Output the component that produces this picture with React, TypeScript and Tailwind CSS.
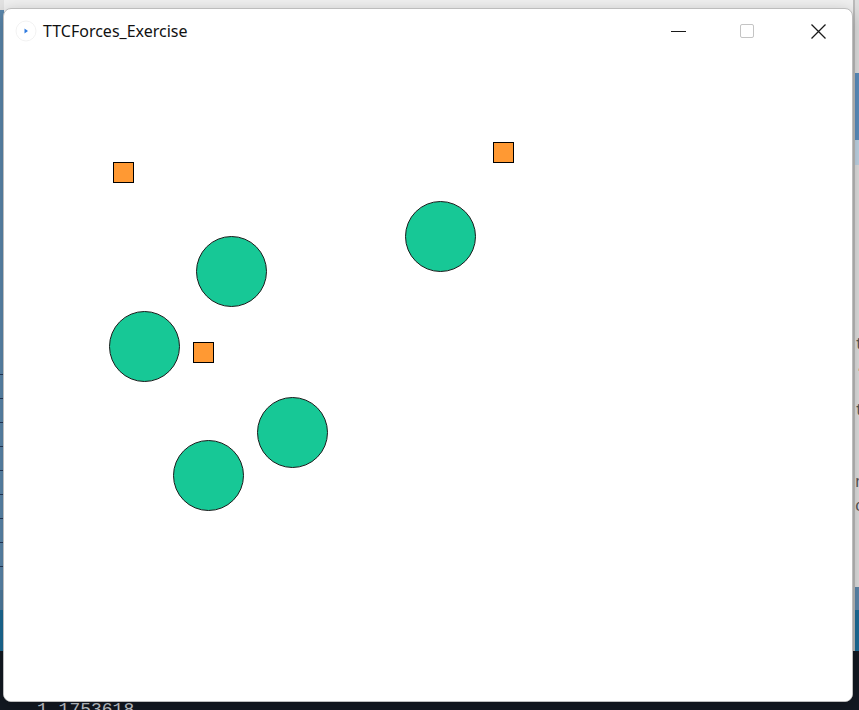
import React from "react";

type Shape = { kind: "circle" | "square"; x: number; y: number };

// positions are relative to the sketch canvas (below the title bar)
const shapes: Shape[] = [
  { kind: "square", x: 109, y: 109 },
  { kind: "square", x: 489, y: 89 },
  { kind: "square", x: 189, y: 289 },
  { kind: "circle", x: 192, y: 183 },
  { kind: "circle", x: 105, y: 258 },
  { kind: "circle", x: 401, y: 148 },
  { kind: "circle", x: 253, y: 344 },
  { kind: "circle", x: 169, y: 387 },
];

const leftTicks = [374, 398, 422, 446, 470, 494, 518, 542, 566];

const AppIcon = () => (
  <svg width="22" height="22" viewBox="0 0 22 22" className="shrink-0">
    <circle cx="11" cy="11" r="10" fill="none" stroke="#f2f2f2" strokeWidth="1" />
    <path d="M9.5 8.5 L13 11 L9.5 13.5 Z" fill="#2f7be0" />
  </svg>
);

const CaptionButtons = () => (
  <div className="flex h-full items-center">
    <div className="flex h-full w-[61px] items-center justify-center">
      <div className="h-px w-[15px] bg-[#1a1a1a]" />
    </div>
    <div className="flex h-full w-[76px] items-center justify-center">
      <div className="h-[14px] w-[14px] rounded-[2px] border border-[#c4c4c4]" />
    </div>
    <div className="flex h-full w-[67px] items-center justify-center">
      <svg width="15" height="15" viewBox="0 0 15 15">
        <path d="M0.5 0.5 L14.5 14.5 M14.5 0.5 L0.5 14.5" stroke="#1a1a1a" strokeWidth="1.3" />
      </svg>
    </div>
  </div>
);

const SketchWindow = () => (
  <div className="absolute left-[3px] top-[8px] flex h-[694px] w-[850px] flex-col overflow-hidden rounded-lg border border-[#bdbdbd] bg-white shadow-[0_4px_16px_rgba(0,0,0,0.25)]">
    {/* Title bar */}
    <div className="flex h-[44px] shrink-0 items-center justify-between pl-[11px]">
      <div className="flex items-center gap-[6px]">
        <AppIcon />
        <span className="text-[16px] leading-none text-[#111] [font-family:'Noto_Sans','Open_Sans',sans-serif]">
          TTCForces_Exercise
        </span>
      </div>
      <div className="flex h-full">
        <CaptionButtons />
      </div>
    </div>

    {/* Canvas */}
    <div className="relative flex-1 bg-white">
      {shapes.map((s, i) =>
        s.kind === "circle" ? (
          <div
            key={i}
            className="absolute h-[71px] w-[71px] rounded-full border border-[#1b1b1b] bg-[#17c896]"
            style={{ left: s.x, top: s.y }}
          />
        ) : (
          <div
            key={i}
            className="absolute h-[21px] w-[21px] border border-black bg-[#ff9933]"
            style={{ left: s.x, top: s.y }}
          />
        )
      )}
    </div>
  </div>
);

export default function App() {
  return (
    <div className="relative h-[710px] w-[859px] overflow-hidden bg-[#e6e6e6]">
      {/* Desktop behind the window */}
      <div className="flex h-full flex-col">
        <div className="flex h-[651px] shrink-0">
          {/* left edge of a window behind */}
          <div className="flex w-[4px] flex-col">
            <div className="h-[10px] bg-[#e2e2e2]" />
            <div className="relative flex-1 bg-[#5b88ad]">
              {leftTicks.map((t) => (
                <div
                  key={t}
                  className="absolute left-0 h-px w-[3px] bg-[#24385a]"
                  style={{ top: t - 10 }}
                />
              ))}
            </div>
            <div className="h-[20px] bg-[#4f7da0]" />
            <div className="h-[41px] bg-[#1b6b96]" />
          </div>
          <div className="flex-1 bg-[#f0f0f0]" />
          {/* right edge: editor window behind */}
          <div className="flex w-[6px] flex-col border-l-2 border-[#bcbcbc] bg-[#dedede]">
            <div className="h-[73px]" />
            <div className="h-[67px] bg-[#5a8dbd]" />
            <div className="h-[25px] bg-[#bed3e4]" />
            <div className="flex flex-1 flex-col overflow-hidden pt-[168px] font-mono text-[16px] leading-[24px] text-[#555]">
              <span>t</span>
              <span className="-mt-[2px]">.</span>
              <span className="mt-[20px]">t</span>
              <span className="mt-[48px]">n</span>
              <span>o</span>
            </div>
            <div className="h-[23px] bg-[#5b86aa]" />
            <div className="h-[41px] bg-[#1b6b96]" />
          </div>
        </div>
        <div className="flex-1 bg-[#131922] pl-[37px] pt-[50px] font-mono text-[18px] leading-none text-[#c8ccd2]">
          1.1753618
        </div>
      </div>

      <SketchWindow />
    </div>
  );
}
